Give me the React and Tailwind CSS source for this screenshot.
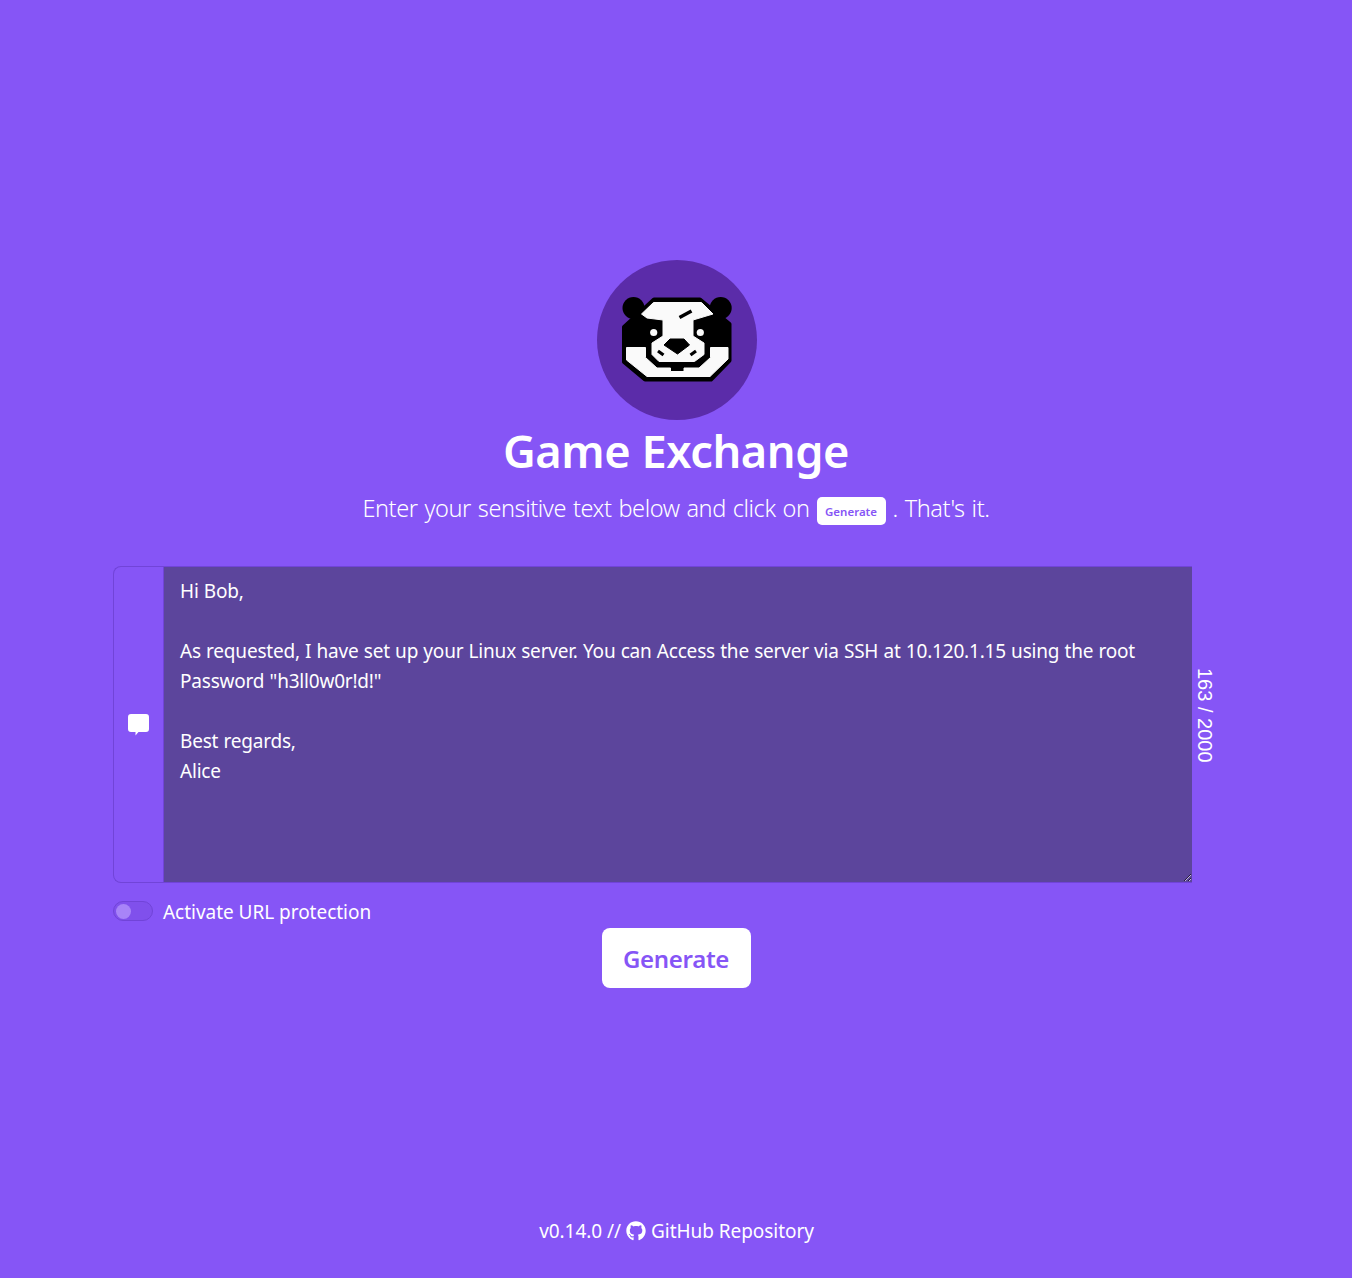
import React, { useState } from "react";
import { FaGithub } from "react-icons/fa";

const message = `Hi Bob,

As requested, I have set up your Linux server. You can Access the server via SSH at 10.120.1.15 using the root Password "h3ll0w0r!d!"

Best regards,
Alice`;

// panda logo, drawn on the 160x160 circle
function Logo() {
  return (
    <svg viewBox="0 0 160 160" className="w-40 h-40 block ml-0.5">
      <circle cx="80" cy="80" r="80" fill="#5b2ca9" />
      <circle cx="36.5" cy="48" r="11" fill="#000" />
      <circle cx="123.7" cy="48" r="11" fill="#000" />
      <path
        d="M57 39.5H103L132.5 64V100.5L114 119.5H48L27 102V67Z"
        fill="#000"
        stroke="#000"
        strokeWidth="4"
        strokeLinejoin="round"
      />
      <path
        d="M44.5 54L56.5 42.5H104.5L116 54L96 60V76L107 83V94.5L97.5 101.5H62L55 94.5V83L66 76V60L50 58Z"
        fill="#fafafa"
        stroke="#fafafa"
        strokeWidth="1"
        strokeLinejoin="round"
      />
      <path
        d="M29.5 87.5H48.5V97.5L60 108H73.5V111.5H87V108H102L113.5 97.5V87.5H131V99L113 116.5H50L29.5 100Z"
        fill="#fafafa"
        stroke="#fafafa"
        strokeWidth="1"
        strokeLinejoin="round"
      />
      <circle cx="56.7" cy="72.5" r="3.6" fill="#fafafa" />
      <circle cx="103.3" cy="72.5" r="3.6" fill="#fafafa" />
      <path d="M67 85L73 79H87L92.5 85L80.5 94Z" fill="#000" stroke="#000" strokeLinejoin="round" />
      <path d="M82.5 57.5L94.5 51" stroke="#000" strokeWidth="3.5" fill="none" />
      <path d="M61 91L66.5 95M99 91L93.5 95" stroke="#000" strokeWidth="3.2" fill="none" />
    </svg>
  );
}

export default function App() {
  const [secret, setSecret] = useState(message);
  const [protect, setProtect] = useState(false);

  return (
    <div className="min-h-screen bg-[#8655f6] text-white flex flex-col font-['Noto_Sans',sans-serif]">
      <main className="flex flex-col items-center pt-[260px]">
        <Logo />
        <h1 className="text-[45.2px] leading-[62px] font-semibold mt-0 tracking-[-0.45px]">Game Exchange</h1>
        <p className="flex items-center text-[23.5px] leading-8 font-light mt-[10px] h-8 tracking-[-0.42px] [word-spacing:1.2px] whitespace-pre">
          Enter your sensitive text below and click on
          <span className="inline-flex items-center justify-center bg-white text-[#8655f6] rounded-[5px] text-[11.5px] font-semibold w-[69px] h-7 mx-[7px] mt-[6px] pt-[1px] tracking-normal">
            Generate
          </span>
          . That's it.
        </p>

        <form className="w-[1126px] mt-[42px]">
          <div className="flex">
            <div className="w-[1079px] h-[317px] flex rounded-l-lg border border-r-0 border-[#7144d8] box-border">
              <div className="w-[49px] shrink-0 flex items-center justify-center">
                <svg viewBox="0 0 21 22" className="w-[21px] h-[22px]">
                  <path
                    d="M3 0H18A3 3 0 0 1 21 3V15A3 3 0 0 1 18 18H10.5L7.5 21.5V18H3A3 3 0 0 1 0 15V3A3 3 0 0 1 3 0Z"
                    fill="#fff"
                  />
                </svg>
              </div>
              <textarea
                value={secret}
                onChange={(e) => setSecret(e.target.value)}
                className="flex-1 bg-[#5c459c] border-l border-[#7144d8] px-4 py-[9px] text-[19px] leading-[30px] tracking-[-0.2px] [word-spacing:0.5px] text-white outline-none"
              />
            </div>
            <div className="self-center mb-[18px] ml-[2px] text-xl leading-[22px] [writing-mode:vertical-rl] font-['Liberation_Sans',sans-serif]">
              {secret.length} / 2000
            </div>
          </div>

          <label className="flex items-center gap-[10px] mt-[14px] h-[30px]">
            <button
              type="button"
              onClick={() => setProtect(!protect)}
              className="w-10 h-5 rounded-full border border-[#7144d8] bg-[#8050ec] flex items-center pl-[2px] mt-[-2px]"
            >
              <span className="w-[15px] h-[15px] rounded-full bg-[#a884f8]" />
            </button>
            <span className="text-[19px] tracking-[-0.03px]">Activate URL protection</span>
          </label>

          <div className="flex justify-center mt-[1px]">
            <button
              type="button"
              className="w-[149px] h-[60px] pt-[1px] bg-white text-[#8655f6] rounded-lg text-2xl font-semibold tracking-[-0.3px]"
            >
              Generate
            </button>
          </div>
        </form>
      </main>

      <footer className="mt-[228px] flex items-center justify-center gap-[5px] pl-[1px] text-[19px] leading-[30px] tracking-[-0.05px]">
        <span>v0.14.0 //</span>
        <FaGithub className="w-5 h-5" />
        <span>GitHub Repository</span>
      </footer>
    </div>
  );
}
